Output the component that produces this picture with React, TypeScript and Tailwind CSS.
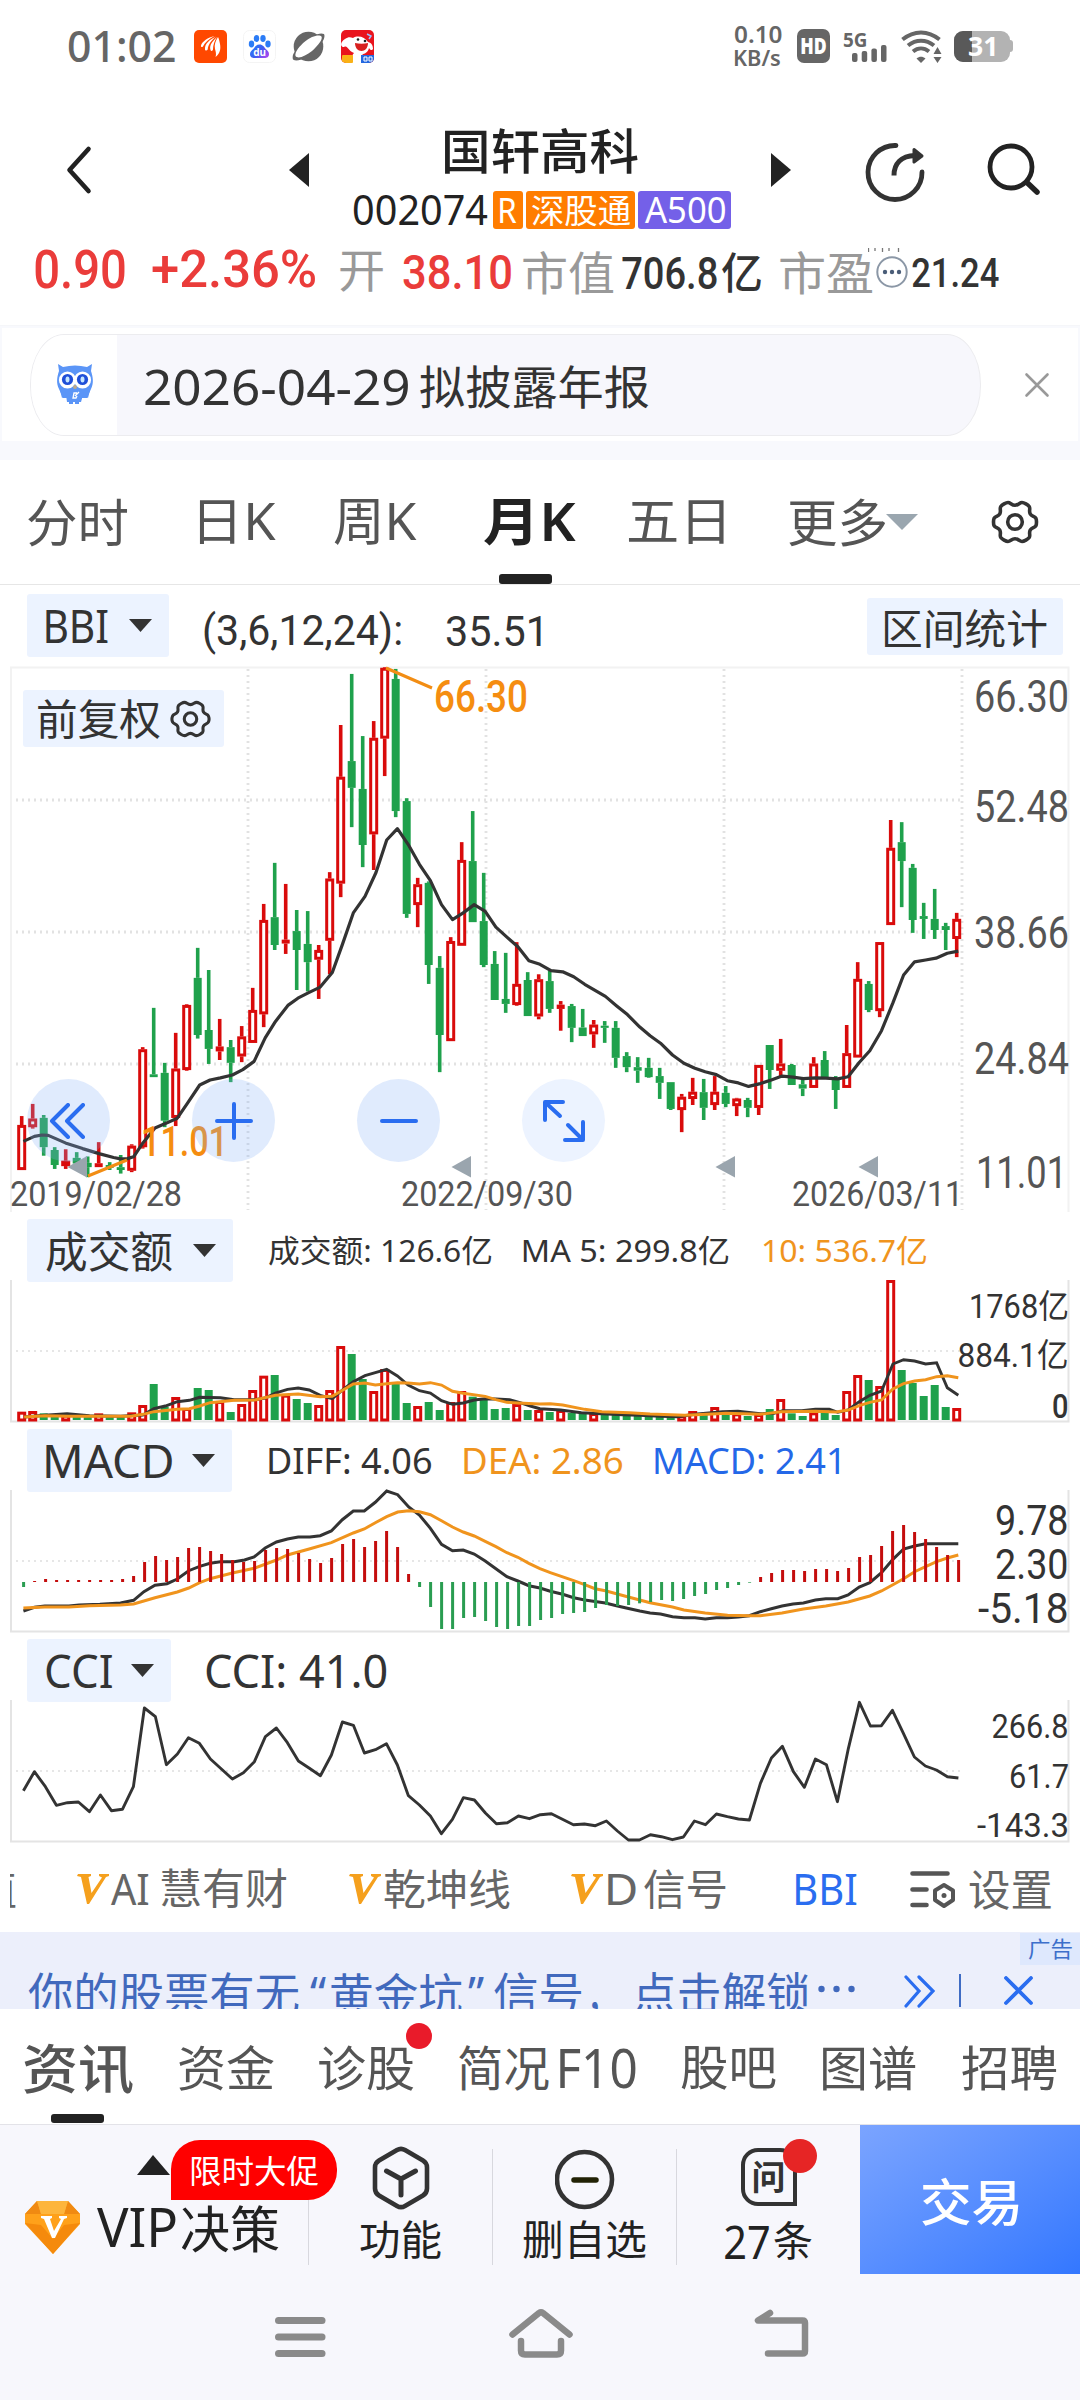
import React, { useLayoutEffect, useRef } from "react";

const CANVAS = typeof document !== "undefined" ? document.createElement("canvas") : null;

/** Text whose visible glyphs fill the width of its box and are centred on its height. */
function Fit({ className = "", children }: { className?: string; children: string }) {
  const box = useRef<HTMLSpanElement>(null);
  const inner = useRef<HTMLSpanElement>(null);
  useLayoutEffect(() => {
    const run = () => {
      const b = box.current;
      const i = inner.current;
      const ctx = CANVAS?.getContext("2d");
      if (!b || !i || !ctx) return;
      const cs = getComputedStyle(i);
      ctx.font = `${cs.fontStyle} ${cs.fontWeight} ${cs.fontSize} ${cs.fontFamily}`;
      const m = ctx.measureText(children);
      const size = parseFloat(cs.fontSize);
      const ink = m.actualBoundingBoxLeft + m.actualBoundingBoxRight;
      const baseline = (size - m.fontBoundingBoxAscent - m.fontBoundingBoxDescent) / 2 + m.fontBoundingBoxAscent;
      const centre = baseline - (m.actualBoundingBoxAscent - m.actualBoundingBoxDescent) / 2;
      i.style.transform = `scaleX(${b.clientWidth / ink}) translate(${m.actualBoundingBoxLeft}px, ${size / 2 - centre}px)`;
    };
    run();
    document.fonts?.ready.then(run);
  }, [children]);
  return (
    <span ref={box} className={"block shrink-0 leading-none whitespace-nowrap " + className}>
      <span ref={inner} className="inline-block origin-left whitespace-pre leading-none align-top">
        {children}
      </span>
    </span>
  );
}

const UI = "font-['Noto_Sans','Noto_Sans_CJK_SC',sans-serif]";
const NUM = "font-[Roboto,'Noto_Sans_CJK_SC',sans-serif]";

/* ------------------------------ chart data ------------------------------ */

const STEP = 11.0;
const X0 = 21.7;
const cx = (i: number) => X0 + i * STEP;

// [up, high, body top, body bottom, low]
const CANDLES: [number, number, number, number, number][] = [
  [1, 1277, 1302, 1428, 1428], [1, 1243, 1284, 1308, 1312], [0, 1274, 1282, 1364, 1388], [0, 1364, 1372, 1414, 1425],
  [1, 1370, 1402, 1417, 1425], [0, 1378, 1394, 1410, 1420], [0, 1390, 1408, 1420, 1448], [1, 1350, 1409, 1420, 1420],
  [0, 1406, 1414, 1422, 1428], [0, 1386, 1420, 1428, 1438], [1, 1356, 1360, 1430, 1434], [1, 1084, 1090, 1364, 1368],
  [0, 974, 1160, 1168, 1168], [0, 1128, 1156, 1290, 1308], [1, 1044, 1144, 1282, 1305], [1, 964, 966, 1148, 1150],
  [0, 806, 890, 1050, 1060], [0, 868, 1036, 1089, 1131], [1, 1005, 1082, 1096, 1120], [0, 1064, 1084, 1128, 1182],
  [1, 1025, 1054, 1110, 1126], [1, 918, 980, 1072, 1072], [1, 683, 728, 992, 1028], [0, 568, 720, 798, 812],
  [1, 627, 783, 794, 823], [0, 700, 759, 812, 924], [0, 703, 795, 846, 928], [1, 798, 812, 839, 949],
  [1, 594, 612, 786, 880], [1, 182, 327, 626, 664], [0, 39, 283, 358, 468], [0, 213, 361, 518, 580],
  [1, 171, 218, 488, 588], [1, 20, 22, 220, 325], [0, 25, 53, 423, 440], [0, 387, 395, 711, 722],
  [1, 610, 628, 686, 748], [0, 620, 624, 854, 907], [0, 829, 862, 1050, 1154], [1, 776, 787, 1067, 1067],
  [1, 510, 560, 800, 800], [0, 423, 563, 734, 734], [0, 596, 731, 854, 860], [0, 815, 851, 952, 952],
  [0, 820, 949, 963, 988], [1, 790, 907, 966, 968], [0, 874, 896, 997, 997], [1, 880, 894, 998, 1006],
  [0, 870, 899, 977, 988], [1, 955, 965, 977, 1038], [0, 963, 969, 1030, 1070], [0, 977, 1029, 1053, 1053],
  [1, 1008, 1021, 1048, 1086], [0, 1011, 1024, 1030, 1072], [0, 1011, 1030, 1114, 1142], [0, 1098, 1109, 1140, 1154],
  [0, 1112, 1140, 1150, 1184], [0, 1114, 1142, 1168, 1170], [0, 1142, 1165, 1184, 1229], [0, 1182, 1182, 1257, 1260],
  [1, 1215, 1223, 1260, 1322], [1, 1170, 1209, 1229, 1246], [0, 1173, 1210, 1254, 1288], [1, 1165, 1209, 1246, 1260],
  [0, 1193, 1212, 1243, 1252], [1, 1226, 1228, 1249, 1277], [0, 1226, 1232, 1254, 1280], [1, 1134, 1134, 1254, 1274],
  [0, 1078, 1078, 1148, 1201], [1, 1061, 1130, 1150, 1165], [0, 1131, 1134, 1190, 1190], [0, 1175, 1188, 1200, 1221],
  [1, 1112, 1130, 1198, 1198], [0, 1095, 1120, 1172, 1172], [0, 1165, 1172, 1204, 1257], [1, 1022, 1101, 1198, 1198],
  [1, 846, 893, 1113, 1113], [0, 899, 907, 980, 986], [1, 790, 790, 983, 1000], [1, 448, 526, 742, 742],
  [0, 454, 510, 563, 692], [0, 571, 582, 728, 764], [0, 680, 717, 725, 781], [0, 641, 725, 756, 781],
  [0, 736, 745, 756, 812], [1, 708, 725, 781, 832],
];

const BBI_LINE = [
  68, 1348, 100, 1334, 122, 1330, 140, 1331, 190, 1352, 240, 1368, 290, 1383, 330, 1393, 350, 1397, 370, 1396, 388, 1391,
  415, 1352, 450, 1310, 480, 1298, 515, 1283, 545, 1240, 580, 1190, 610, 1176, 640, 1170, 675, 1162, 705, 1147, 738, 1124,
  770, 1058, 800, 1012, 836, 967, 865, 947, 895, 932, 930, 916, 965, 875, 995, 795, 1026, 708, 1060, 662, 1092, 595,
  1123, 504, 1154, 472, 1185, 516, 1218, 572, 1250, 618, 1282, 685, 1314, 727, 1345, 708, 1377, 685, 1409, 704, 1440, 748,
  1472, 776, 1504, 803, 1536, 842, 1568, 852, 1600, 870, 1634, 873, 1666, 887, 1698, 908, 1758, 942, 1790, 968, 1822, 993,
  1858, 1028, 1888, 1052, 1918, 1073, 1953, 1106, 1986, 1129, 2018, 1143, 2048, 1153, 2080, 1161, 2112, 1178, 2144, 1184,
  2174, 1194, 2208, 1186, 2240, 1176, 2271, 1165, 2303, 1168, 2333, 1172, 2368, 1170, 2398, 1171, 2433, 1173, 2463, 1167,
  2495, 1127, 2526, 1094, 2560, 1038, 2593, 960, 2624, 882, 2656, 845, 2688, 840, 2718, 835, 2751, 821, 2783, 815,
];

const VOLUMES = [
  608, 606, 610, 615, 617, 615, 616, 613, 618, 618, 610, 588, 522, 590, 564, 597, 534, 540, 576, 606, 585, 543, 500, 495,
  557, 567, 579, 588, 543, 411, 432, 507, 546, 480, 519, 579, 591, 576, 600, 579, 546, 560, 567, 597, 594, 585, 600, 603,
  606, 603, 609, 610, 612, 612, 613, 614, 616, 614, 617, 618, 618, 606, 610, 594, 610, 613, 618, 615, 597, 570, 610, 618,
  610, 609, 615, 546, 498, 510, 531, 213, 480, 519, 558, 525, 591, 597,
];

const MA5 = [
  70, 621, 130, 616, 195, 611, 260, 617, 350, 619, 415, 615, 447, 596, 480, 588, 515, 575, 550, 571, 580, 562, 640, 563,
  680, 569, 740, 569, 770, 564, 800, 549, 835, 538, 866, 534, 898, 540, 930, 556, 965, 566, 995, 540, 1026, 515, 1060, 497,
  1090, 488, 1123, 478, 1154, 498, 1185, 525, 1218, 542, 1250, 549, 1282, 572, 1314, 583, 1345, 579, 1377, 570, 1409, 566,
  1440, 567, 1480, 569, 1510, 578, 1540, 588, 1568, 596, 1628, 600, 1688, 608, 1748, 611, 1808, 614, 1858, 616, 1918, 619,
  1968, 620, 2018, 613, 2058, 609, 2098, 605, 2143, 604, 2208, 611, 2248, 610, 2273, 602, 2328, 602, 2368, 598, 2408, 598,
  2433, 607, 2463, 600, 2495, 575, 2526, 556, 2560, 543, 2593, 462, 2624, 449, 2656, 453, 2688, 462, 2720, 458, 2751, 533,
  2783, 556,
];

const MA10 = [
  70, 621, 130, 617, 200, 619, 380, 619, 415, 613, 447, 605, 515, 598, 550, 596, 580, 588, 610, 578, 680, 571, 740, 570,
  800, 556, 866, 552, 930, 560, 965, 559, 995, 541, 1026, 522, 1060, 519, 1090, 525, 1123, 521, 1154, 518, 1185, 519,
  1218, 522, 1250, 518, 1282, 525, 1314, 544, 1345, 550, 1409, 559, 1440, 569, 1472, 577, 1504, 579, 1568, 582, 1598, 581,
  1634, 585, 1698, 598, 1748, 605, 1828, 608, 1888, 612, 1988, 616, 2068, 612, 2108, 610, 2208, 613, 2268, 605, 2368, 604,
  2428, 606, 2463, 600, 2495, 587, 2526, 577, 2560, 570, 2593, 537, 2624, 521, 2656, 513, 2688, 509, 2720, 500, 2751, 497,
  2783, 503,
];

const MACD_BARS = [
  1131, 1113, 1107, 1110, 1110, 1110, 1110, 1110, 1110, 1107, 1098, 1056, 1038, 1050, 1041, 1014, 1011, 1023, 1032, 1050,
  1056, 1053, 1020, 1014, 1017, 1029, 1047, 1059, 1044, 1002, 987, 1011, 993, 963, 1011, 1092, 1131, 1191, 1257, 1257, 1224,
  1221, 1233, 1251, 1257, 1248, 1248, 1230, 1224, 1212, 1209, 1206, 1194, 1185, 1188, 1185, 1180, 1176, 1170, 1173, 1167,
  1158, 1152, 1140, 1134, 1125, 1118, 1101, 1089, 1080, 1080, 1083, 1077, 1077, 1083, 1074, 1041, 1035, 1008, 963, 945, 966,
  987, 1011, 1035, 1050,
];

const DIFF_LINE = [
  68, 1203, 100, 1192, 130, 1188, 200, 1188, 230, 1185, 290, 1183, 350, 1179, 388, 1171, 418, 1145, 450, 1126, 485, 1121,
  515, 1107, 548, 1082, 580, 1069, 610, 1060, 640, 1055, 680, 1055, 710, 1050, 738, 1041, 770, 1014, 803, 996, 835, 987,
  866, 981, 900, 981, 930, 977, 962, 963, 994, 929, 1026, 903, 1058, 903, 1090, 877, 1123, 843, 1155, 854, 1187, 891,
  1218, 915, 1250, 955, 1282, 1003, 1314, 1022, 1345, 1020, 1377, 1032, 1409, 1053, 1440, 1076, 1472, 1100, 1504, 1113,
  1536, 1127, 1568, 1134, 1598, 1144, 1634, 1153, 1666, 1163, 1698, 1170, 1758, 1179, 1790, 1187, 1822, 1195, 1858, 1203,
  1888, 1209, 1918, 1212, 1953, 1220, 1986, 1223, 2018, 1223, 2048, 1227, 2080, 1223, 2113, 1223, 2144, 1221, 2176, 1217,
  2208, 1205, 2240, 1196, 2271, 1188, 2303, 1182, 2333, 1179, 2368, 1170, 2398, 1166, 2433, 1166, 2463, 1155, 2495, 1131,
  2526, 1118, 2560, 1088, 2593, 1048, 2624, 1017, 2656, 1008, 2688, 1001, 2783, 1001,
];

const DEA_LINE = [
  68, 1194, 130, 1191, 200, 1191, 260, 1187, 350, 1185, 388, 1182, 450, 1163, 515, 1146, 548, 1134, 580, 1118, 610, 1106,
  675, 1089, 738, 1075, 803, 1050, 835, 1035, 898, 1017, 962, 998, 1026, 969, 1058, 957, 1090, 938, 1123, 920, 1155, 906,
  1187, 902, 1218, 905, 1250, 914, 1282, 932, 1314, 951, 1345, 966, 1377, 978, 1409, 994, 1440, 1010, 1472, 1028, 1504, 1042,
  1536, 1060, 1568, 1076, 1598, 1088, 1666, 1112, 1698, 1124, 1728, 1136, 1758, 1142, 1822, 1160, 1888, 1178, 1953, 1191,
  1986, 1200, 2048, 1209, 2113, 1216, 2176, 1217, 2208, 1217, 2271, 1209, 2333, 1197, 2398, 1188, 2463, 1176, 2526, 1158,
  2560, 1143, 2593, 1124, 2624, 1106, 2656, 1085, 2688, 1070, 2720, 1055, 2751, 1044, 2783, 1035,
];

const CCI_VALUES = [
  482, 425, 470, 526, 518, 516, 545, 495, 542, 538, 470, 234, 260, 404, 372, 323, 340, 387, 417, 447, 428, 395, 320, 294,
  338, 393, 415, 437, 375, 276, 286, 369, 359, 341, 405, 497, 525, 558, 611, 568, 503, 510, 549, 581, 578, 558, 566, 554,
  551, 568, 584, 582, 587, 573, 603, 630, 630, 614, 620, 629, 621, 573, 584, 552, 560, 567, 570, 460, 384, 349, 425, 472,
  387, 404, 515, 355, 217, 288, 287, 241, 310, 381, 408, 420, 440, 444,
];

const poly = (a: number[], sy: number) => {
  let s = "";
  for (let i = 0; i < a.length; i += 2) s += `${(a[i] / 2.904).toFixed(1)},${(a[i + 1] / sy).toFixed(1)} `;
  return s;
};

const RED = "#d90b0b";
const GREEN = "#1fa14c";
const DARK = "#333333";
const ORANGE = "#f0941d";

type LabelProps = { x: number; y: number; w: number; size: number; color?: string; weight?: number; children: string };
function Label({ x, y, w, size, color = "#555555", weight = 400, children }: LabelProps) {
  return (
    <text
      x={x}
      y={y}
      textLength={w}
      lengthAdjust="spacingAndGlyphs"
      fontSize={size}
      fill={color}
      fontWeight={weight}
      fontFamily="Roboto, 'Noto Sans CJK SC', sans-serif"
    >
      {children}
    </text>
  );
}

/* -------------------------------- charts -------------------------------- */

function PriceChart() {
  const y = (v: number) => v / 2.8 - 7;
  return (
    <svg className="block h-[545px] w-[1080px] overflow-visible" viewBox="0 0 1080 545">
      <g stroke="#f2f2f2" strokeWidth="2" fill="none">
        <path d="M11 545V0.5H1068.5V545" />
      </g>
      <g stroke="#e2e2e2" strokeWidth="2.8" strokeDasharray="2 4">
        {[248, 486, 724, 962].map((v) => <path key={v} d={`M${v} 2V543`} />)}
        {[133, 265, 397].map((v) => <path key={v} d={`M16 ${v}H962`} />)}
      </g>
      {CANDLES.map(([up, h, t, b, l], i) => {
        const x = cx(i);
        const c = up ? RED : GREEN;
        const height = Math.max(2, (b - t) / 2.8);
        return (
          <g key={i}>
            {h < t && <rect x={x - 1.8} y={y(h)} width="3.6" height={(t - h) / 2.8} fill={c} />}
            {l > b && <rect x={x - 1.8} y={y(b)} width="3.6" height={(l - b) / 2.8} fill={c} />}
            {up && height > 5 ? (
              <rect x={x - 3} y={y(t) + 1.4} width="6" height={height - 2.8} fill="#fff" stroke={c} strokeWidth="3" />
            ) : (
              <rect x={x - 4} y={y(t)} width="8" height={height} fill={c} />
            )}
          </g>
        );
      })}
      <polyline points={poly(BBI_LINE, 2.8)} transform="translate(0 -7)" fill="none" stroke={DARK} strokeWidth="3.2" strokeLinejoin="round" />
      <path d="M386 1L432 21M88 509L127 493" stroke="#f28d14" strokeWidth="3" />
      <Label x={434} y={45} w={94} size={43.5} color="#f58d10" weight={500}>66.30</Label>
      <Label x={141} y={488.5} w={87} size={43} color="#f58d10" weight={500}>11.01</Label>
      <g fill="#9aa5ae">
        {[67.5, 451.5, 715.5, 858.5].map((x) => <path key={x} d={`M${x} 500l19.500 -11v21.500z`} />)}
      </g>
      <Label x={974} y={45} w={95} size={43.5}>66.30</Label>
      <Label x={974} y={155} w={95} size={43.5}>52.48</Label>
      <Label x={974} y={281} w={95} size={43.5}>38.66</Label>
      <Label x={974} y={407} w={95} size={43.5}>24.84</Label>
      <Label x={976} y={521} w={91} size={43.5}>11.01</Label>
      <Label x={10} y={539} w={172} size={35}>2019/02/28</Label>
      <Label x={401} y={539} w={172} size={35}>2022/09/30</Label>
      <Label x={792} y={539} w={171} size={35}>2026/03/11</Label>
    </svg>
  );
}

function PanelFrame() {
  return (
    <g>
      <path d="M11 0V141.500H1068.500V0" stroke="#e4e4e4" strokeWidth="2" fill="none" />
      <path d="M16 71H962" stroke="#e6e6e6" strokeWidth="2" strokeDasharray="2 4" />
    </g>
  );
}

function VolumeChart() {
  return (
    <svg className="block h-[142px] w-[1080px] overflow-visible" viewBox="0 0 1080 142">
      <PanelFrame />
      {VOLUMES.map((v, i) => {
        const top = v / 3 - 70;
        const up = CANDLES[i][0];
        return up ? (
          <rect key={i} x={cx(i) - 3} y={top + 0.5} width="6" height={Math.max(1, 139.5 - top)} fill="#fff" stroke={RED} strokeWidth="3" />
        ) : (
          <rect key={i} x={cx(i) - 4} y={top} width="8" height={140 - top} fill={GREEN} />
        );
      })}
      <polyline points={poly(MA5, 3)} transform="translate(0 -70)" fill="none" stroke={DARK} strokeWidth="2.9" />
      <polyline points={poly(MA10, 3)} transform="translate(0 -70)" fill="none" stroke={ORANGE} strokeWidth="2.9" />
      <Label x={969} y={37.500} w={100} size={33.5} color={DARK}>1768亿</Label>
      <Label x={957.500} y={87} w={111} size={33.5} color={DARK}>884.1亿</Label>
      <Label x={1052} y={138} w={16.500} size={33} color={DARK} weight={500}>0</Label>
    </svg>
  );
}

function MacdChart() {
  return (
    <svg className="block h-[142px] w-[1080px] overflow-visible" viewBox="0 0 1080 142">
      <PanelFrame />
      <polyline points={poly(DIFF_LINE, 3)} transform="translate(0 -280)" fill="none" stroke={DARK} strokeWidth="3" />
      <polyline points={poly(DEA_LINE, 3)} transform="translate(0 -280)" fill="none" stroke={ORANGE} strokeWidth="3" />
      {MACD_BARS.map((v, i) => {
        const down = v > 1116;
        const t = Math.min(v, 1116) / 3 - 280;
        return <rect key={i} x={cx(i) + 0.4} y={t} width="3" height={Math.abs(v - 1116) / 3} fill={down ? "#2a9d51" : "#c40d0d"} />;
      })}
      <Label x={995} y={45} w={73.500} size={42} color={DARK}>9.78</Label>
      <Label x={995} y={89} w={73.500} size={42} color={DARK}>2.30</Label>
      <Label x={978} y={133} w={90.500} size={42} color={DARK}>-5.18</Label>
    </svg>
  );
}

function CciChart() {
  return (
    <svg className="block h-[143px] w-[1080px] overflow-visible" viewBox="0 0 1080 143">
      <PanelFrame />
      <polyline
        points={CCI_VALUES.map((v, i) => `${(23.4 + i * 11).toFixed(1)},${(v / 3 - 70).toFixed(1)}`).join(" ")}
        fill="none"
        stroke={DARK}
        strokeWidth="2.9"
        strokeLinejoin="round"
      />
      <Label x={991.500} y={37.500} w={77} size={33} color={DARK}>266.8</Label>
      <Label x={1009} y={87.500} w={60} size={33} color={DARK}>61.7</Label>
      <Label x={977} y={137} w={92} size={33} color={DARK}>-143.3</Label>
    </svg>
  );
}

/* --------------------------------- icons -------------------------------- */

function GearIcon({ className }: { className: string }) {
  return (
    <svg className={className} viewBox="0 0 48 44" fill="none" stroke="#333" strokeWidth="3.6" strokeLinejoin="round">
      <path d="M17 2.500c2.500 0 3.500 2.700 7 2.700s4.500-2.700 7-2.700c2 0 6 2.400 7.200 4 1.500 2.200-.6 4.500 1 7.300 1.600 2.800 4.600 2.200 5.700 4.500.8 1.700.8 5.700 0 7.400-1.100 2.300-4.100 1.700-5.700 4.500-1.600 2.800.5 5.100-1 7.300-1.200 1.600-5.200 4-7.200 4-2.500 0-3.500-2.700-7-2.700s-4.500 2.700-7 2.700c-2 0-6-2.400-7.200-4-1.500-2.200.6-4.500-1-7.300-1.600-2.800-4.600-2.200-5.700-4.500-.8-1.700-.8-5.700 0-7.400 1.100-2.300 4.100-1.700 5.700-4.500 1.600-2.800-.5-5.100 1-7.300C11 4.900 15 2.500 17 2.500Z" />
      <circle cx="24" cy="22" r="7.300" />
    </svg>
  );
}

function StatusBar() {
  return (
    <div className="flex h-[92px] items-center">
      <Fit className={"ml-[68px] w-[107px] text-[43px] font-medium text-[#666] " + UI}>01:02</Fit>
      <svg className="ml-[19px] size-[33px]" viewBox="0 0 33 33">
        <rect width="33" height="33" rx="5" fill="#ff4800" />
        <path d="M20.500 6C14 7.500 8 11.500 7 15.500c-.3 1.300.5 2 1.800 1.200C11 12 15 9 20.500 6ZM22 6.500c-6 3-11.500 7-11 13 .2 1.500 2 1.300 2.700 0C14 14 18 10 22 6.500ZM23 7c-4 4-8 7.500-6.500 13 .5 1.500 2.300 1 2.500-.5C19 15 20.500 11 23 7ZM24 7c-2.500 4-4 8-3 12 .8 3 1.500 5 .5 8 4.500-3.500 5.500-8 4.500-13-.4-2.500-1-5-2-7Z" fill="#fff" />
      </svg>
      <svg className="ml-[16px] size-[33px]" viewBox="0 0 33 33">
        <defs>
          <linearGradient id="du" x1="0" x2="1" y1="0" y2=".6">
            <stop offset="0" stopColor="#2584fb" />
            <stop offset=".6" stopColor="#3d5cf0" />
            <stop offset="1" stopColor="#9a4bf0" />
          </linearGradient>
        </defs>
        <rect x=".5" y=".5" width="32" height="32" rx="6" fill="#fff" stroke="#f4f4f4" />
        <g fill="#2b7cf6">
          <ellipse cx="8.500" cy="14" rx="2.700" ry="3.400" />
          <ellipse cx="13.500" cy="8.500" rx="2.700" ry="3.400" />
          <ellipse cx="20" cy="8.500" rx="2.700" ry="3.400" />
          <ellipse cx="25" cy="14" rx="2.700" ry="3.400" />
        </g>
        <path d="M16.500 14.500c3.500 0 4.500 2.500 6 4.200 2 1.700 3.500 3 3.500 5.300 0 3-2 4-4.500 4h-10C9 28 7 27 7 24c0-2.300 1.500-3.600 3.500-5.300 1.500-1.700 2.500-4.200 6-4.200Z" fill="url(#du)" />
        <text x="10.300" y="26" fontSize="10" fontWeight="700" fill="#fff" fontFamily="Noto Sans, sans-serif">du</text>
      </svg>
      <svg className="ml-[16px] h-[31px] w-[33px]" viewBox="0 0 33 31">
        <circle cx="16.500" cy="15.500" r="14.800" fill="#666" />
        <path d="M1 28.500C-.5 24 3 19 10 12 19 4.500 28 1 32 3c2 3.500-2.500 10.500-9 16.500C15 27 5.500 31.500 1 28.500Z" fill="#666" />
        <path d="M3.500 25C2.500 21 8 14.500 13 10.500 19 5.500 27 3 29.500 5.500c1.500 3-3.500 9-9.500 14.500C13.500 25 6 28.500 3.500 25Z" fill="#fff" />
      </svg>
      <svg className="ml-[16px] size-[33px]" viewBox="0 0 33 33">
        <clipPath id="jd"><rect width="33" height="33" rx="5" /></clipPath>
        <g clipPath="url(#jd)">
          <rect width="33" height="33" fill="#e9141d" />
          <path d="M11 33c-1-5 0-8 2-10C6 20 7 15 3 17-1 17-1 12 4 9c3-2 5-2 8-1 5-3 12-1 15 4 4 1 5 4 5 7-1 2-3 1-4-1-1 4-4 6-7 6 4 3 4 5 4 9Z" fill="#fff" />
          <path d="M14 13c4 1 9 1 13 0 0 5-3 8-6.500 8S14 18 14 13Z" fill="#d8201f" />
          <circle cx="17" cy="9.500" r="1.300" fill="#222" /><circle cx="24" cy="11" r="1.300" fill="#222" />
          <rect x="1" y="25" width="11" height="8" rx="1" fill="#f9b117" />
          <rect x="20" y="25" width="13" height="8" fill="#2468e0" />
          <path d="M23 27h3v4h-3zM28 27h3v4h-3z" stroke="#fff" fill="none" />
          <path d="M26 4l4 2-2 3" stroke="#9cc0ff" strokeWidth="1.500" fill="none" />
        </g>
      </svg>
      <div className="ml-[359px] flex w-[49px] flex-col items-center">
        <Fit className={"w-[48px] text-[23.5px] font-semibold text-[#666] " + UI}>0.10</Fit>
        <Fit className={"w-[45px] text-[22px] font-semibold text-[#666] " + UI}>KB/s</Fit>
      </div>
      <div className="ml-[15px] flex h-[34px] w-[33px] items-center justify-center rounded-[7px] bg-[#666]">
        <Fit className={"w-[25px] text-[23px] font-black text-white " + UI}>HD</Fit>
      </div>
      <div className="ml-[13px] flex w-[46px] flex-col">
        <Fit className={"w-[23px] text-[20px] font-bold text-[#666] " + UI}>5G</Fit>
        <svg className="-mt-[5px] ml-[9px] h-[17px] w-[36px]" viewBox="0 0 36 17" fill="#666">
          <rect x="0" y="8" width="5.500" height="9" rx="2" />
          <rect x="9.700" y="6" width="5.500" height="11" rx="2" />
          <rect x="19.400" y="3.500" width="5.500" height="13.500" rx="2" />
          <rect x="29" y="0" width="5.500" height="17" rx="2" />
        </svg>
      </div>
      <svg className="ml-[12px] h-[33px] w-[42px]" viewBox="0 0 42 33">
        <g fill="none" stroke="#666" strokeWidth="4">
          <path d="M1.500 9.500C13 0 27 0 38.500 9.500" />
          <path d="M7 15.500C15 9 25 9 33 15.500" />
          <path d="M12 21.500c5-4 11-4 16 0" />
        </g>
        <path d="M15.500 28.500c3-2.300 6-2.300 9 0L20 33Z" fill="#666" />
        <path d="M36.500 17l4 7h-8zM36.500 33l4-6h-8z" fill="#666" />
      </svg>
      <div className="relative ml-[11px] flex h-[31px] w-[56px] items-center overflow-hidden rounded-[9px] bg-[#b3b3b3]">
        <div className="h-full w-[18px] bg-[#595959]" />
        <div className="absolute inset-0 flex items-center pl-[15px]">
          <Fit className={"w-[26px] text-[27px] font-bold text-white " + UI}>31</Fit>
        </div>
      </div>
      <div className="h-[12px] w-[3px] rounded-r bg-[#b3b3b3]" />
    </div>
  );
}

function Header() {
  return (
    <div className="flex h-[154px] items-center">
      <svg className="ml-[66px] h-[50px] w-[27px] translate-y-[1px]" viewBox="0 0 27 50" fill="none" stroke="#222" strokeWidth="4.600" strokeLinecap="round" strokeLinejoin="round">
        <path d="M22.500 4L3.500 25l19 21" />
      </svg>
      <svg className="ml-[196px] h-[34px] w-[20px] translate-y-[1px]" viewBox="0 0 20 34"><path d="M20 0v34L0 17z" fill="#222" /></svg>
      <div className="ml-[45px] flex h-full w-[377px] flex-col pt-[35px]">
        <div className="flex h-[49px] items-center pl-[90px]">
          <Fit className={"w-[194px] -translate-y-[1px] text-[48px] font-medium text-[#222] " + UI}>国轩高科</Fit>
        </div>
        <div className="mt-[15px] flex h-[38px] items-center">
          <Fit className={"w-[134px] text-[42px] text-[#222] " + UI}>002074</Fit>
          <div className="ml-[5px] flex h-[38px] w-[30px] items-center justify-center rounded-[3px] bg-[#ff7d00]">
            <Fit className={"w-[17px] text-[35px] text-white " + UI}>R</Fit>
          </div>
          <div className="ml-[3px] flex h-[38px] w-[109px] items-center justify-center rounded-[3px] bg-[#ff7d00]">
            <Fit className={"w-[98px] text-[33px] text-white " + UI}>深股通</Fit>
          </div>
          <div className="ml-[3px] flex h-[38px] w-[93px] items-center justify-center rounded-[3px] bg-[#7460e8]">
            <Fit className={"w-[80px] text-[36px] text-white " + UI}>A500</Fit>
          </div>
        </div>
      </div>
      <svg className="ml-[40px] h-[34px] w-[20px] translate-y-[1px]" viewBox="0 0 20 34"><path d="M0 0v34l20-17z" fill="#222" /></svg>
      <svg className="ml-[74px] h-[62px] w-[62px] translate-y-[3px]" viewBox="0 0 62 62" fill="none" stroke="#333" strokeWidth="4.800" strokeLinecap="round">
        <path d="M31 4.500A27 27 0 1 0 57 31" />
        <path d="M29 34.500C29 23 36 15 50 14.500" strokeLinecap="butt" strokeWidth="5" />
        <path d="M49 8.500l8 6.500-8 6z" fill="#333" strokeWidth="3" strokeLinejoin="round" />
      </svg>
      <svg className="ml-[59px] h-[54px] w-[56px]" viewBox="0 0 56 54" fill="none" stroke="#222" strokeLinecap="round">
        <circle cx="25" cy="25" r="21" strokeWidth="4.800" />
        <path d="M41 40.500L51 50" strokeWidth="5.500" />
      </svg>
    </div>
  );
}

function QuoteRow() {
  return (
    <div className="relative flex h-[48px] items-center">
      <Fit className={"ml-[35px] w-[90px] -translate-y-[1px] text-[53px] font-medium text-[#ea3c3a] " + NUM}>0.90</Fit>
      <Fit className={"ml-[27px] w-[163px] -translate-y-[1px] text-[52px] font-medium text-[#ea3c3a] " + NUM}>+2.36%</Fit>
      <Fit className={"ml-[25px] w-[43px] translate-y-[1px] text-[46px] text-[#999] " + UI}>开</Fit>
      <Fit className={"ml-[20px] w-[108px] translate-y-[2px] text-[48px] font-medium text-[#ea3c3a] " + NUM}>38.10</Fit>
      <Fit className={"ml-[12px] w-[91px] translate-y-[3px] text-[46px] text-[#999] " + UI}>市值</Fit>
      <Fit className={"ml-[8px] w-[95px] translate-y-[2px] text-[45px] font-medium text-[#333] " + NUM}>706.8</Fit>
      <Fit className={"ml-[5px] w-[39px] translate-y-[2px] text-[43px] font-medium text-[#333] " + UI}>亿</Fit>
      <Fit className={"ml-[19px] w-[92px] translate-y-[3px] text-[46px] text-[#999] " + UI}>市盈</Fit>
      <svg className="-ml-[4px] h-[44px] w-[42px]" viewBox="0 0 42 44">
        <path d="M0.500 0v4M7 0v3M14.500 0v4M21 0v3M30.500 0v4" stroke="#777" strokeWidth="1.300" />
        <circle cx="24" cy="24" r="14.700" fill="#fff" stroke="#8b97a6" strokeWidth="2" />
        <g fill="#4a5d78"><circle cx="17" cy="24" r="2.200" /><circle cx="24" cy="24" r="2.200" /><circle cx="31" cy="24" r="2.200" /></g>
      </svg>
      <Fit className={"ml-[2px] w-[87px] translate-y-[2px] text-[41px] font-medium text-[#333] " + NUM}>21.24</Fit>
    </div>
  );
}

function Owl() {
  return (
    <svg className="h-[46px] w-[44px]" viewBox="0 0 44 46">
      <path d="M5 2l5 3c8-2 16-2 24 0l5-3-1 7c2 6 3 12 0 18l-4 9H10l-4-9C3 21 4 15 6 9Z" fill="#5b95f7" />
      <path d="M7 28l2 8 3-2v-6zM37 28l-2 8-3-2v-6z" fill="#5b95f7" />
      <path d="M12 26h20l-4 14h-2v2h-4v-2h-2v2h-4v-2h-2Z" fill="#5b95f7" />
      <circle cx="14.500" cy="18" r="8.600" fill="#fff" />
      <circle cx="29.500" cy="18" r="8.600" fill="#fff" />
      <circle cx="14.500" cy="17.500" r="5.600" fill="#1f4fd8" />
      <circle cx="29.500" cy="17.500" r="5.600" fill="#1f4fd8" />
      <ellipse cx="14.500" cy="17.500" rx="2" ry="3" fill="#c5e6ff" />
      <ellipse cx="29.500" cy="17.500" rx="2" ry="3" fill="#c5e6ff" />
      <circle cx="22" cy="25" r="2" fill="#b9a98f" />
      <path d="M24 31h-3l-1 5h3l1-2M22 34l4-4" stroke="#fff" strokeWidth="1.300" fill="none" />
    </svg>
  );
}

function Notice() {
  return (
    <div className="mt-[31px] h-[135px] border-t border-[#f5f6f9] bg-[#f8f9fd] pt-[2px]">
      <div className="mx-[2px] flex h-[113px] items-center bg-white">
        <div className="ml-[28px] flex h-[102px] w-[951px] overflow-hidden rounded-[34px/50px] border border-[#ececef] bg-[#f7f7fc]">
          <div className="flex w-[86px] items-center bg-white pl-[22px]">
            <Owl />
          </div>
          <div className="flex items-center pt-[4px]">
            <Fit className={"ml-[28px] w-[263px] text-[50px] text-[#333] " + UI}>2026-04-29</Fit>
            <Fit className={"ml-[12px] w-[229px] text-[46px] text-[#333] " + UI}>拟披露年报</Fit>
          </div>
        </div>
        <svg className="ml-[43px] size-[26px]" viewBox="0 0 26 26" stroke="#999" strokeWidth="2.600" strokeLinecap="round">
          <path d="M2.500 2.500l21 21M23.500 2.500l-21 21" />
        </svg>
      </div>
    </div>
  );
}

function PeriodTabs() {
  const t = "text-[#555] text-[51px] ";
  return (
    <div className="flex h-[125px] items-center border-b border-[#e6e6e6]">
      <Fit className={"ml-[28px] w-[100px] " + t + UI}>分时</Fit>
      <Fit className={"ml-[71px] w-[77px] " + t + UI}>日K</Fit>
      <Fit className={"ml-[58px] w-[83px] " + t + UI}>周K</Fit>
      <div className="ml-[67px] flex h-full w-[92px] flex-col justify-between">
        <div className="flex h-[123px] items-center">
          <Fit className={"w-[92px] text-[52px] font-semibold text-[#222] " + UI}>月K</Fit>
        </div>
        <div className="-mt-[10px] ml-[15px] h-[10px] w-[53px] shrink-0 rounded-[3px] bg-[#222]" />
      </div>
      <Fit className={"ml-[52px] w-[96px] " + t + UI}>五日</Fit>
      <Fit className={"ml-[65px] w-[97px] " + t + UI}>更多</Fit>
      <svg className="h-[16px] w-[32px]" viewBox="0 0 32 16"><path d="M0 0h32L16 16z" fill="#9aa6af" /></svg>
      <GearIcon className="ml-[73px] h-[44px] w-[48px]" />
    </div>
  );
}

function Dropdown({ className, children }: { className: string; children: React.ReactNode }) {
  return (
    <div className={"flex h-[63px] shrink-0 items-center rounded-[3px] bg-[#ecf3ff] pl-[19px] " + className}>
      {children}
      <svg className="ml-auto h-[13px] w-[23px]" viewBox="0 0 23 13"><path d="M0 0h23L11.500 13z" fill="#333" /></svg>
    </div>
  );
}

function ChartButtons() {
  const c = "flex size-[83px] shrink-0 items-center justify-center rounded-full ";
  const s = { fill: "none", stroke: "#2a6df0", strokeWidth: 4, strokeLinecap: "round", strokeLinejoin: "round" } as const;
  return (
    <div className="absolute top-[412px] left-[27px] flex gap-[82px]">
      <div className={c + "bg-[#83aff7]/25"}>
        <svg className="-ml-[3px] h-[36px] w-[38px]" viewBox="0 0 38 36" {...s}><path d="M20 2L4 18l16 16M35 2L19 18l16 16" /></svg>
      </div>
      <div className={c + "bg-[#83aff7]/25"}>
        <svg className="size-[38px]" viewBox="0 0 38 38" {...s}><path d="M2 19h34M19 2v34" /></svg>
      </div>
      <div className={c + "bg-[#83aff7]/25"}>
        <svg className="size-[38px]" viewBox="0 0 38 38" {...s}><path d="M2 19h34" /></svg>
      </div>
      <div className={c + "bg-[#ecf3ff]"}>
        <svg className="h-[42px] w-[42px]" viewBox="0 0 42 42" {...s}><path d="M20 2H2v18M3 3l14 13M22 40h18V22M39 39L25 25" /></svg>
      </div>
    </div>
  );
}

function VMark() {
  return (
    <svg className="h-[30px] w-[32px] shrink-0" viewBox="0 0 32 30">
      <path d="M1 0h13v2l-2.500 1 3 16L25 3.500 22 2V0h10v2l-3 1-17 27h-2L4 3 0 2z" fill="#f5a01d" />
    </svg>
  );
}

function IndicatorTools() {
  const t = "text-[44px] text-[#666] ";
  return (
    <div className="flex h-[89px] items-center pt-[3px]">
      <div className="ml-[10px] flex h-[40px] w-[6px] items-center justify-end overflow-hidden">
        <Fit className={"w-[40px] text-[42px] text-[#666] " + UI}>值</Fit>
      </div>
      <div className="ml-[61px] flex items-center"><VMark /></div>
      <Fit className={"ml-[2px] w-[38px] " + t + UI}>AI</Fit>
      <Fit className={"ml-[12px] w-[126px] text-[42px] text-[#666] " + UI}>慧有财</Fit>
      <div className="ml-[62px] flex items-center"><VMark /></div>
      <Fit className={"ml-[3px] w-[126px] text-[42px] text-[#666] " + UI}>乾坤线</Fit>
      <div className="ml-[61px] flex items-center"><VMark /></div>
      <Fit className={"ml-[5px] w-[28px] " + t + UI}>D</Fit>
      <Fit className={"ml-[8px] w-[82px] text-[42px] text-[#666] " + UI}>信号</Fit>
      <Fit className={"ml-[70px] w-[61px] text-[44px] text-[#2a6df0] " + UI}>BBI</Fit>
      <svg className="ml-[53px] h-[40px] w-[46px]" viewBox="0 0 46 40" fill="none" stroke="#555" strokeWidth="4.600" strokeLinecap="round">
        <path d="M2.500 4.500h35M2.500 20.500h14M2.500 36h14" />
        <path d="M34 16l9 5.500v9.500l-9 6-9-6v-9.500z" strokeWidth="4" strokeLinejoin="round" />
        <circle cx="34" cy="26.500" r="2.500" fill="#555" stroke="none" />
      </svg>
      <Fit className={"ml-[13px] w-[82px] text-[43px] text-[#666] " + UI}>设置</Fit>
    </div>
  );
}

function AdBar() {
  const t = "text-[45px] text-[#4169bd] ";
  return (
    <div className="relative flex h-[77px] items-start overflow-hidden bg-[#eceffb] pt-[39px]">
      <Fit className={"ml-[28px] w-[271px] " + t + UI}>你的股票有无</Fit>
      <Fit className={"ml-[11px] w-[16px] -translate-y-[11px] " + t + UI}>“</Fit>
      <Fit className={"ml-[5px] w-[131px] " + t + UI}>黄金坑</Fit>
      <Fit className={"ml-[6px] w-[16px] -translate-y-[11px] " + t + UI}>”</Fit>
      <Fit className={"ml-[10px] w-[87px] " + t + UI}>信号</Fit>
      <Fit className={"ml-[10px] w-[7px] translate-y-[16px] " + t + UI}>，</Fit>
      <Fit className={"ml-[35px] w-[177px] " + t + UI}>点击解锁</Fit>
      <svg className="mt-[14px] ml-[8px] h-[8px] w-[37px]" viewBox="0 0 37 8" fill="#4169bd">
        <circle cx="3.500" cy="4" r="3.200" /><circle cx="18.500" cy="4" r="3.200" /><circle cx="33.500" cy="4" r="3.200" />
      </svg>
      <svg className="mt-[3px] ml-[47px] h-[34px] w-[34px]" viewBox="0 0 34 34" fill="none" stroke="#2a6df0" strokeWidth="3.200" strokeLinecap="round">
        <path d="M4 3l13 14L4 32M17 3l14 14-14 15" />
      </svg>
      <div className="mt-[3px] ml-[23px] h-[33px] w-[2px] bg-[#3f6cc4]" />
      <svg className="mt-[5px] ml-[43px] size-[30px]" viewBox="0 0 30 30" stroke="#2a6df0" strokeWidth="3.800" strokeLinecap="round">
        <path d="M2 2l25 25M27 2L2 27" />
      </svg>
      <div className="absolute top-[1px] right-0 flex h-[32px] w-[60px] items-center bg-[#dee8fd] pl-[8px]">
        <Fit className={"w-[44px] text-[22px] text-[#3c6fcb] " + UI}>广告</Fit>
      </div>
    </div>
  );
}

function InfoTabs() {
  const t = "text-[48px] text-[#555] ";
  return (
    <div className="relative flex h-[116px] items-center border-b border-[#e3e3e8] pt-[3px]">
      <Fit className={"ml-[24px] w-[109px] text-[53px] font-medium text-[#555] " + UI}>资讯</Fit>
      <Fit className={"ml-[46px] w-[95px] " + t + UI}>资金</Fit>
      <div className="relative ml-[45px]">
        <Fit className={"w-[95px] " + t + UI}>诊股</Fit>
        <div className="absolute -top-[21px] left-[87px] size-[26px] rounded-full bg-[#e91b2a]" />
      </div>
      <Fit className={"ml-[45px] w-[90px] " + t + UI}>简况</Fit>
      <Fit className={"ml-[11px] w-[76px] text-[54px] text-[#555] " + UI}>F10</Fit>
      <Fit className={"ml-[45px] w-[95px] " + t + UI}>股吧</Fit>
      <Fit className={"ml-[47px] w-[93px] " + t + UI}>图谱</Fit>
      <Fit className={"ml-[46px] w-[95px] " + t + UI}>招聘</Fit>
      <div className="absolute bottom-[1px] left-[51px] h-[9px] w-[53px] rounded-[3px] bg-[#222]" />
    </div>
  );
}

function BottomBar() {
  return (
    <div className="relative flex h-[149px] bg-[#f7f7fc]">
      <div className="relative flex w-[308px] items-end pb-[20px]">
        <svg className="ml-[25px] h-[53px] w-[55px]" viewBox="0 0 55 53">
          <path d="M12 0h31l12 13v10L28 53 0 23V13z" fill="#ffa11a" />
          <path d="M0 13L12 0l4 13zM55 13L43 0l-4 13z" fill="#f08a12" />
          <path d="M12 0h31l-4 13H16z" fill="#fdb53c" />
          <path d="M0 22l28 31 27-31-16 2-11 14-12-14z" fill="#f58a0c" />
          <path d="M16 15h11v2l-2 1 4 12 7-12-2-1v-2h8v2l-3 1-9 19h-3l-8-19-3-1z" fill="#fff" />
        </svg>
        <Fit className={"ml-[17px] w-[79px] translate-y-[1px] text-[55px] text-[#222] " + UI}>VIP</Fit>
        <Fit className={"ml-[5px] w-[98px] text-[50px] text-[#222] " + UI}>决策</Fit>
        <svg className="absolute top-[30px] left-[137px] h-[20px] w-[33px]" viewBox="0 0 33 20"><path d="M16 0l17 20H0z" fill="#222" /></svg>
        <div className="absolute top-[15px] left-[171px] z-10 flex h-[60px] w-[166px] items-center rounded-[29px] rounded-bl-none bg-[#ff0000] pt-[2px] pl-[20px]">
          <Fit className={"w-[127px] text-[32px] text-white " + UI}>限时大促</Fit>
        </div>
      </div>
      <div className="mt-[24px] h-[116px] w-px bg-[#d8d8de]" />
      <div className="flex w-[183px] flex-col items-center pt-[21px]">
        <svg className="h-[64px] w-[58px]" viewBox="0 0 58 64" fill="none" stroke="#333" strokeWidth="4.600" strokeLinecap="round" strokeLinejoin="round">
          <path d="M25 4c2.500-1.500 5.500-1.500 8 0l18 10.500c2.500 1.500 4 4 4 7v21c0 3-1.500 5.500-4 7L33 60c-2.500 1.500-5.500 1.500-8 0L7 49.500c-2.500-1.500-4-4-4-7v-21c0-3 1.500-5.500 4-7Z" />
          <path d="M14.500 25L29 33l14.500-8M29 33v16" strokeWidth="5" />
        </svg>
        <Fit className={"mt-[10px] w-[81px] text-[41px] text-[#222] " + UI}>功能</Fit>
      </div>
      <div className="mt-[24px] h-[116px] w-px bg-[#d8d8de]" />
      <div className="flex w-[183px] flex-col items-center pt-[24px]">
        <svg className="h-[61px] w-[60px]" viewBox="0 0 60 61" fill="none" stroke="#333" strokeWidth="4.600" strokeLinecap="round">
          <circle cx="29.500" cy="30.500" r="27.500" />
          <path d="M19 31h22" stroke="#222205" strokeWidth="5.500" />
        </svg>
        <Fit className={"mt-[10px] w-[123px] text-[41px] text-[#222] " + UI}>删自选</Fit>
      </div>
      <div className="mt-[24px] h-[116px] w-px bg-[#d8d8de]" />
      <div className="relative flex w-[183px] flex-col items-center pt-[23px]">
        <div className="flex h-[58px] w-[56px] items-center justify-center rounded-[17px] rounded-br-none border-4 border-[#333]">
          <Fit className={"w-[30px] text-[34px] font-bold text-[#333] " + UI}>问</Fit>
        </div>
        <div className="mt-[12px] flex items-center">
          <Fit className={"w-[44px] translate-y-[1px] text-[45px] text-[#222] " + UI}>27</Fit>
          <Fit className={"ml-[5px] w-[38px] text-[41px] text-[#222] " + UI}>条</Fit>
        </div>
        <div className="absolute top-[14px] left-[106px] size-[34px] rounded-full bg-[#e62525]" />
      </div>
      <div className="absolute top-0 right-0 flex h-[149px] w-[220px] items-center justify-center bg-linear-to-br from-[#7ba4ff] to-[#3377ff]">
        <Fit className={"w-[97px] translate-y-[2px] text-[50px] font-medium text-white " + UI}>交易</Fit>
      </div>
    </div>
  );
}

function NavBar() {
  return (
    <div className="flex h-[126px] items-start bg-[#f7f7fc]">
      <svg className="mt-[43px] ml-[275px] h-[42px] w-[51px]" viewBox="0 0 51 42" fill="#8a8a8a">
        <rect width="50.500" height="7" y="0" rx="3.500" /><rect width="50.500" height="7" y="16.500" rx="3.500" /><rect width="50.500" height="7" y="33" rx="3.500" />
      </svg>
      <svg className="mt-[33px] ml-[182px] h-[54px] w-[66px]" viewBox="0 0 66 54" fill="none" stroke="#8a8a8a" strokeWidth="6.500" strokeLinecap="round" strokeLinejoin="round">
        <path d="M4.500 27.500L31 6q2-1.500 4 0l26.500 21.500" />
        <path d="M13 34v9.500q0 4 4 4h32q4 0 4-4V34" />
      </svg>
      <svg className="mt-[34px] ml-[179px] h-[54px] w-[56px]" viewBox="0 0 56 54" fill="none" stroke="#8a8a8a" strokeWidth="6.500" strokeLinecap="round" strokeLinejoin="round">
        <path d="M17 5L5 12.500h44.500q2.500 0 2.500 2.500v28q0 2.500-2.500 2.500H15" />
      </svg>
    </div>
  );
}

export default function App() {
  return (
    <div className="h-[2400px] w-[1080px] overflow-hidden bg-white">
      <StatusBar />
      <Header />
      <QuoteRow />
      <Notice />
      <PeriodTabs />

      <div className="flex h-[82px] items-start">
        <Dropdown className="mt-[9px] ml-[27px] w-[142px] pr-[17px]">
          <Fit className={"w-[62px] translate-y-[1px] text-[45px] text-[#333] " + UI}>BBI</Fit>
        </Dropdown>
        <Fit className={"mt-[27px] ml-[35px] w-[197px] text-[42px] text-[#333] " + NUM}>(3,6,12,24):</Fit>
        <Fit className={"mt-[25px] ml-[46px] w-[94px] text-[43px] text-[#333] " + NUM}>35.51</Fit>
        <div className="mt-[13px] ml-[326px] flex h-[57px] w-[196px] items-center justify-center rounded-[3px] bg-[#ecf3ff]">
          <Fit className={"w-[163px] translate-y-[2px] text-[41px] text-[#333] " + UI}>区间统计</Fit>
        </div>
      </div>

      <div className="relative">
        <PriceChart />
        <div className="absolute top-[23px] left-[23px] flex h-[57px] w-[201px] items-center rounded-[3px] bg-[#ecf3ff] pl-[15px]">
          <Fit className={"w-[122px] translate-y-[1px] text-[42px] text-[#333] " + UI}>前复权</Fit>
          <GearIcon className="ml-[10px] h-[38px] w-[41px]" />
        </div>
        <ChartButtons />
      </div>

      <div className="flex h-[68px] items-start pt-[7px]">
        <Dropdown className="ml-[27px] w-[206px] pr-[17px]">
          <Fit className={"w-[126px] text-[43px] text-[#333] " + UI}>成交额</Fit>
        </Dropdown>
        <Fit className={"mt-[16px] ml-[36px] w-[223px] text-[31px] text-[#333] " + UI}>成交额: 126.6亿</Fit>
        <Fit className={"mt-[16px] ml-[32px] w-[205px] text-[31px] text-[#333] " + UI}>MA 5: 299.8亿</Fit>
        <Fit className={"mt-[16px] ml-[34px] w-[164px] text-[31px] text-[#f0941d] " + UI}>10: 536.7亿</Fit>
      </div>
      <VolumeChart />

      <div className="flex h-[68px] items-start pt-[7px]">
        <Dropdown className="ml-[27px] w-[205px] pr-[17px]">
          <Fit className={"w-[126px] text-[46px] text-[#333] " + UI}>MACD</Fit>
        </Dropdown>
        <Fit className={"mt-[14px] ml-[37px] w-[162px] text-[36px] text-[#333] " + UI}>DIFF: 4.06</Fit>
        <Fit className={"mt-[14px] ml-[33px] w-[158px] text-[36px] text-[#f0941d] " + UI}>DEA: 2.86</Fit>
        <Fit className={"mt-[14px] ml-[33px] w-[184px] text-[36px] text-[#2468e8] " + UI}>MACD: 2.41</Fit>
      </div>
      <MacdChart />

      <div className="flex h-[68px] items-start pt-[7px]">
        <Dropdown className="ml-[27px] w-[144px] pr-[17px]">
          <Fit className={"w-[66px] text-[46px] text-[#333] " + UI}>CCI</Fit>
        </Dropdown>
        <Fit className={"mt-[9px] ml-[35px] w-[181px] text-[46px] text-[#333] " + UI}>CCI: 41.0</Fit>
      </div>
      <CciChart />

      <IndicatorTools />
      <AdBar />
      <InfoTabs />
      <BottomBar />
      <NavBar />
    </div>
  );
}
